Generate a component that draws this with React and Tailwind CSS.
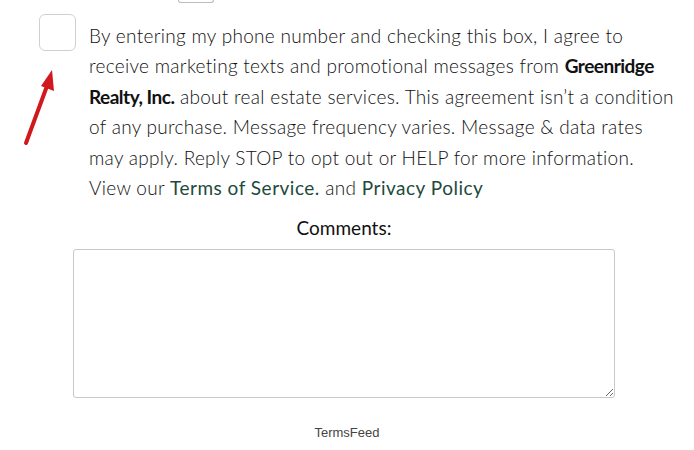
import React from "react";

export default function App() {
  const body = { fontFamily: "Lato, 'Open Sans', sans-serif" };
  return (
    <div className="relative w-[694px] h-[450px] bg-white overflow-hidden text-[#333]" style={body}>
      <div className="ml-[178px] w-[36px] h-[3px] border-x border-b border-[#bbb] rounded-b-[3px]" />
      <div className="flex pl-[39px] mt-[11px]">
        <div className="shrink-0 w-[37px] h-[37px] rounded-[6px] border border-[#d0d0d0] bg-white" />
        <p className="ml-[13px] mt-[7px] text-[19px] leading-[30.4px] tracking-[0.3px] font-light text-[#111] whitespace-nowrap">
          By entering my phone number and checking this box, I agree to<br />
          receive marketing texts and promotional messages from <b className="font-bold text-[#111] tracking-[-0.5px]">Greenridge</b><br />
          <b className="font-bold text-[#111] tracking-[-0.5px]">Realty, Inc.</b> about real estate services. This agreement isn’t a condition<br />
          of any purchase. Message frequency varies. Message &amp; data rates<br />
          may apply. Reply STOP to opt out or HELP for more information.<br />
          View our <a className="text-[#1d4a3b] font-normal tracking-[0.5px]">Terms of Service.</a> and <a className="text-[#1d4a3b] font-normal tracking-[0.5px]">Privacy Policy</a>
        </p>
      </div>
      <div className="ml-[73px] w-[542px] flex flex-col items-center">
        <label className="mt-[13px] text-[19px] leading-[24px] text-[#111]">Comments:</label>
        <textarea className="mt-[9px] w-full h-[149px] border border-[#c8c8c8] rounded-[3px] bg-white resize-y" />
      </div>
      <div className="mt-[27px] text-center text-[13px] leading-[16px] text-[#444]" style={{ fontFamily: "'Liberation Sans', Arial, sans-serif" }}>
        TermsFeed
      </div>
      <svg className="absolute left-[20px] top-[64px]" width="40" height="84" viewBox="0 0 40 84">
        <line x1="6" y1="79" x2="27" y2="22" stroke="#d0181d" strokeWidth="4" strokeLinecap="round" />
        <polygon points="32,6 34,27 21,22" fill="#d0181d" />
      </svg>
    </div>
  );
}
